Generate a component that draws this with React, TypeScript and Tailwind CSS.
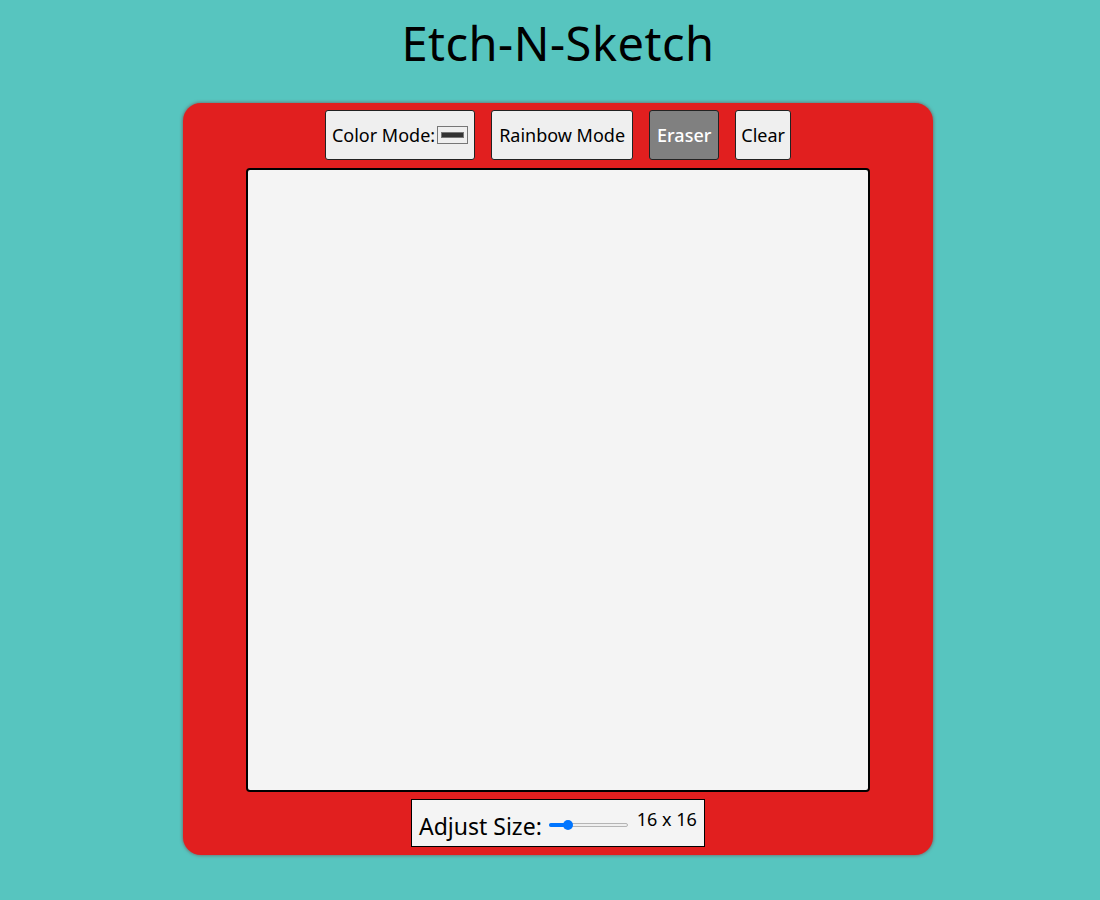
import { useState } from 'react';

export default function App() {
  const [size, setSize] = useState(16);
  const [color, setColor] = useState('#333333');
  const pct = ((size - 1) / 63) * 100;

  return (
    <div className="min-h-[900px] bg-[#57c5bf] pl-[16px] font-['Noto_Sans',sans-serif] text-black">
      <h1 className="pt-[12px] text-center text-[47px] leading-[62px] font-normal tracking-[0.5px]">Etch-N-Sketch</h1>

      <div className="mx-auto mt-[29px] flex w-[750px] flex-col items-center rounded-[18px] bg-[#e11f1f] pt-[7px] pb-[8px] shadow-[0_0_3px_1px_rgba(120,80,80,0.6)]">
        <div className="flex gap-[16px]">
          <button className="flex h-[50px] items-center gap-[2px] rounded-[3px] border border-[#222] bg-[#efefef] px-[6px] text-[18px]">
            Color Mode:
            <input
              type="color"
              value={color}
              onChange={(e) => setColor(e.target.value)}
              className="h-[18px] w-[31px] cursor-pointer border border-[#777] bg-[#efefef] p-[1px]"
            />
          </button>
          <button className="h-[50px] rounded-[3px] border border-[#222] bg-[#efefef] px-[7px] text-[18px]">Rainbow Mode</button>
          <button className="h-[50px] rounded-[3px] border border-[#222] bg-[#808080] px-[7px] text-[18px] font-medium text-white">Eraser</button>
          <button className="h-[50px] rounded-[3px] border border-[#222] bg-[#efefef] px-[5px] text-[18px]">Clear</button>
        </div>

        <div
          className="mt-[8px] grid h-[624px] w-[624px] rounded-[4px] border-2 border-black bg-[#f4f4f4]"
          style={{ gridTemplateColumns: `repeat(${size}, 1fr)` }}
        />

        <div className="mt-[7px] flex h-[48px] w-[294px] items-start border border-black bg-[#f4f4f4] pl-[7px] pt-[6px]">
          <span className="mt-[5px] text-[23px] leading-[30px]">Adjust Size:</span>
          {/* slider */}
          <div className="relative mt-[12px] ml-[7px] h-[14px] w-[79px]">
            <div className="absolute top-[5px] left-0 h-[4px] w-full rounded-full border border-[#b5b5b5] bg-[#efefef]" />
            <div className="absolute top-[5px] left-0 h-[4px] rounded-full bg-[#0075ff]" style={{ width: `${pct}%` }} />
            <div
              className="absolute top-[2px] h-[10px] w-[10px] -translate-x-1/2 rounded-full bg-[#0075ff]"
              style={{ left: `${pct}%` }}
            />
            <input
              type="range"
              min={1}
              max={64}
              value={size}
              onChange={(e) => setSize(Number(e.target.value))}
              className="absolute inset-0 h-full w-full cursor-pointer opacity-0"
            />
          </div>
          <span className="ml-[9px] text-[18px] leading-[26px]">
            {size} x {size}
          </span>
        </div>
      </div>
    </div>
  );
}
